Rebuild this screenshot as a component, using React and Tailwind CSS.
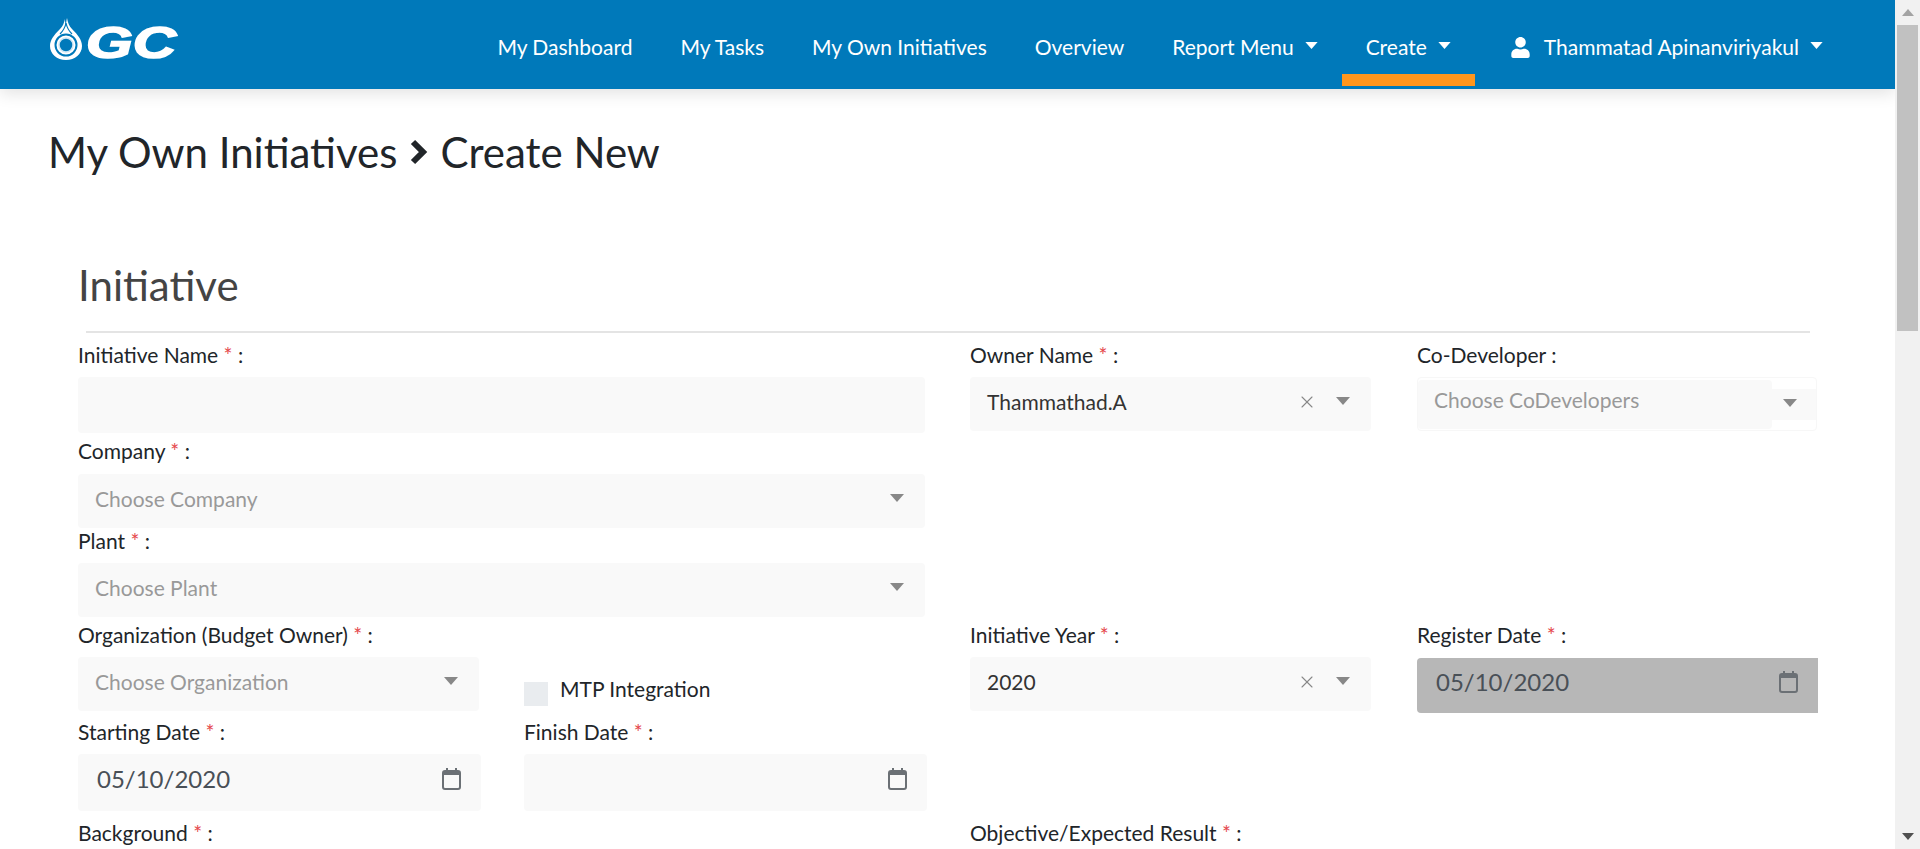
import { X } from "lucide-react";
import { FaUser } from "react-icons/fa";

function Logo() {
  return (
    <svg width="130" height="44" viewBox="0 0 130 44" className="blur-[0.4px] overflow-visible">
      <path d="M17 1c1 5 2 8 5 11 6 6 10 11 10 17 0 8-7 14-16 14S0 37 0 29c0-6 4-11 10-17 3-3 4-6 5-10 0 4 1 8 1 8s0-5 1-9z" fill="#fff" />
      <circle cx="16" cy="28" r="10.5" fill="none" stroke="#0079ba" strokeWidth="2" />
      <circle cx="16" cy="28" r="7" fill="#0079ba" stroke="#cfe6f3" strokeWidth="1.5" />
      <path d="M16 6c1 5 3 8 6 11M16 6c-1 5-3 8-6 11" fill="none" stroke="#0079ba" strokeWidth="1.2" />
      <text x="36" y="41" textLength="90" lengthAdjust="spacingAndGlyphs" fill="#fff" stroke="#fff" strokeWidth="1.6" fontFamily="'Liberation Sans', sans-serif" fontWeight="700" fontStyle="italic" fontSize="44">GC</text>
    </svg>
  );
}

function Caret({ className }) {
  return (
    <svg width="14" height="8" viewBox="0 0 14 8" className={className}>
      <polygon points="0,0 14,0 7,8" fill="currentColor" />
    </svg>
  );
}

function CalendarIcon() {
  return (
    <svg width="19" height="22" viewBox="0 0 19 22" className="text-[#6b7075] mb-[8px]">
      <path d="M5 0v4M14 0v4" stroke="currentColor" strokeWidth="2" />
      <rect x="1" y="3" width="17" height="18" rx="2" fill="none" stroke="currentColor" strokeWidth="2" />
      <rect x="1" y="3" width="17" height="4" fill="currentColor" />
    </svg>
  );
}

function NavItem({ children, active, caret }) {
  return (
    <a className={`flex items-center gap-[11px] h-[86px] pt-[20px] px-6 border-b-[12px] ${active ? "border-[#ff961c]" : "border-transparent"}`}>
      <span>{children}</span>
      {caret && <Caret className="w-[13px] h-[7px] -mt-[3px]" />}
    </a>
  );
}

function Label({ text, required, className = "" }) {
  return (
    <div className={`h-6 leading-6 text-[21px] text-[#212529] whitespace-nowrap ${className}`}>
      {text}
      {required && <span className="text-[#e5484d]"> *</span>} :
    </div>
  );
}

function Select({ value, placeholder, clearable, className = "" }) {
  return (
    <div className={`h-[54px] bg-[#f9f9f9] rounded flex items-center pl-[17px] pr-[21px] text-[21px] ${className}`}>
      <span className={`flex-1 pb-[4px] ${value ? "text-[#333]" : "text-[#999]"}`}>{value || placeholder}</span>
      {clearable && <X size={20} strokeWidth={1.3} className="text-[#888] mr-[19px] mb-[5px]" />}
      <Caret className="text-[#888] mb-[7px]" />
    </div>
  );
}

function DateInput({ value, disabled, className = "" }) {
  return (
    <div className={`flex items-center pl-[19px] pr-[20px] rounded-l text-[24px] text-[#495057] ${disabled ? "h-[55px] bg-[#b7b7b7]" : "h-[57px] bg-[#f9f9f9] rounded-r"} ${className}`}>
      <span className="flex-1 pb-[8px]">{value}</span>
      <CalendarIcon />
    </div>
  );
}

export default function App() {
  return (
    <div className="h-[849px] overflow-hidden flex bg-white font-['Lato','Noto_Sans',sans-serif]">
      <div className="flex-1 min-w-0">
        <header className="relative h-[89px] bg-[#0079ba] shadow-[0_4px_16px_rgba(0,0,0,0.12)] flex items-start justify-between pl-[50px] pr-[48px] text-white text-[21px]">
          <div className="pt-[17px]"><Logo /></div>
          <nav className="flex items-start">
            <NavItem>My Dashboard</NavItem>
            <NavItem>My Tasks</NavItem>
            <NavItem>My Own Initiatives</NavItem>
            <NavItem>Overview</NavItem>
            <NavItem caret>Report Menu</NavItem>
            <NavItem caret active>Create</NavItem>
            <NavItem caret>
              <span className="flex items-center gap-[13px] ml-[11px]"><FaUser size={21} />Thammatad Apinanviriyakul</span>
            </NavItem>
          </nav>
        </header>

        <h1 className="flex items-center gap-[12px] pl-[48px] pt-[43px] h-[82px] text-[42px] leading-[50px] text-[#212529] whitespace-nowrap">
          My Own Initiatives
          <svg width="19" height="26" viewBox="0 0 19 26"><polyline points="4,3 14,13 4,23" fill="none" stroke="#212529" strokeWidth="6" /></svg>
          Create New
        </h1>

        <main className="pl-[78px] w-[1818px]">
          <h2 className="mt-[90px] text-[42px] leading-[48px] text-[#444]">Initiative</h2>
          <hr className="ml-[8px] w-[1724px] mt-[22px] border-t-2 border-[#e4e4e4]" />

          <div className="flex mt-[10px]">
            <div className="w-[847px] mr-[45px]">
              <Label text="Initiative Name" required />
              <div className="mt-[10px] h-[56px] bg-[#f9f9f9] rounded" />
            </div>
            <div className="w-[401px] mr-[46px]">
              <Label text="Owner Name" required />
              <Select className="mt-[10px]" value="Thammathad.A" clearable />
            </div>
            <div className="w-[400px]">
              <Label text="Co-Developer" />
              <div className="mt-[10px] h-[54px] rounded border border-[#f7f7f7] flex items-center">
                <div className="w-[354px] h-[49px] bg-[#f9f9f9] rounded flex items-center pl-[16px] pb-[8px] text-[21px] text-[#999]">Choose CoDevelopers</div>
                <div className="flex-1 h-[31px] bg-[#f9f9f9] flex items-center pl-[11px]"><Caret className="text-[#888] mb-[3px]" /></div>
              </div>
            </div>
          </div>

          <div className="w-[847px]">
            <Label text="Company" required className="mt-[6px]" />
            <Select className="mt-[11px]" placeholder="Choose Company" />
            <Label text="Plant" required className="mt-[1px]" />
            <Select className="mt-[10px]" placeholder="Choose Plant" />
          </div>

          <div className="flex mt-[6px]">
            <div className="w-[401px] mr-[45px]">
              <Label text="Organization (Budget Owner)" required />
              <Select className="mt-[10px]" placeholder="Choose Organization" />
            </div>
            <div className="w-[401px] mr-[45px] flex items-start pt-[59px] gap-[12px] text-[21px] text-[#212529]">
              <span className="w-6 h-6 bg-[#e9ecef]" />
              <span className="-mt-[9px]">MTP Integration</span>
            </div>
            <div className="w-[401px] mr-[46px]">
              <Label text="Initiative Year" required />
              <Select className="mt-[10px]" value="2020" clearable />
            </div>
            <div className="w-[401px]">
              <Label text="Register Date" required />
              <DateInput className="mt-[11px]" value="05/10/2020" disabled />
            </div>
          </div>

          <div className="flex mt-[7px]">
            <div className="w-[403px] mr-[43px]">
              <Label text="Starting Date" required />
              <DateInput className="mt-[10px]" value="05/10/2020" />
            </div>
            <div className="w-[403px]">
              <Label text="Finish Date" required />
              <DateInput className="mt-[10px]" />
            </div>
          </div>

          <div className="flex mt-[10px]">
            <Label text="Background" required className="w-[892px]" />
            <Label text="Objective/Expected Result" required />
          </div>
        </main>
      </div>

      {/* page scrollbar */}
      <div className="w-[25px] shrink-0 bg-[#f1f1f1] flex flex-col items-center relative z-20">
        <svg width="12" height="25" viewBox="0 0 12 25" className="text-[#a3a3a3]"><polygon points="6,9 12,16 0,16" fill="currentColor" /></svg>
        <div className="w-[21px] h-[306px] bg-[#c1c1c1]" />
        <div className="flex-1" />
        <svg width="12" height="25" viewBox="0 0 12 25" className="text-[#505050]"><polygon points="0,9 12,9 6,16" fill="currentColor" /></svg>
      </div>
    </div>
  );
}
